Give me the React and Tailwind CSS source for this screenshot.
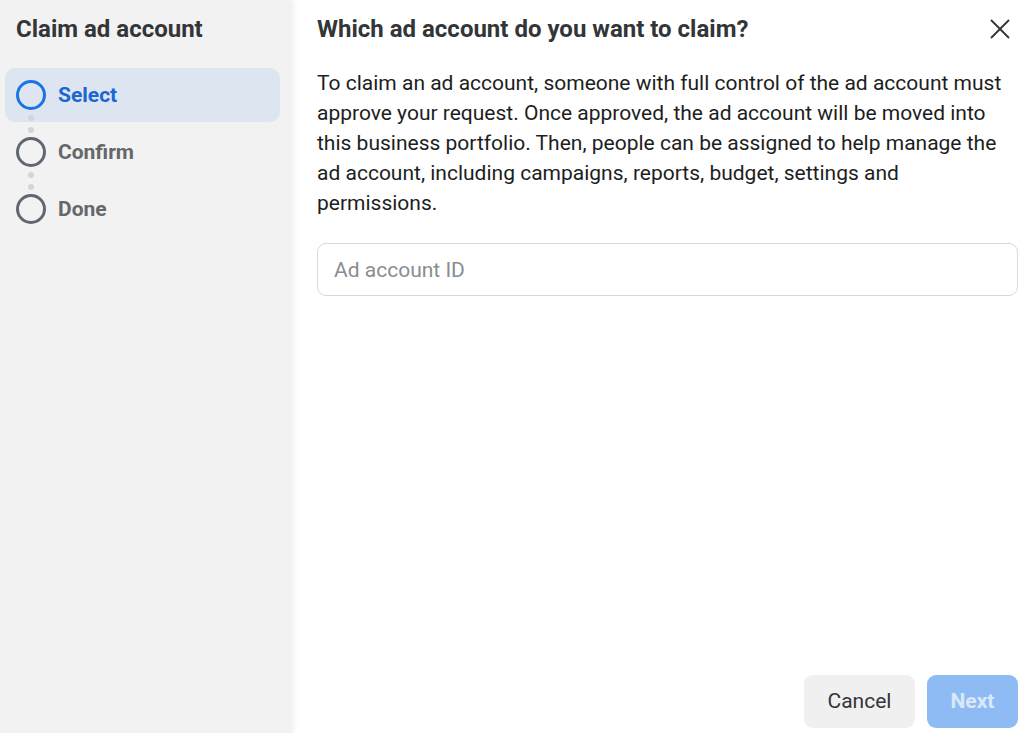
import React from 'react';
import { X } from 'lucide-react';

const steps = [
  { label: 'Select', active: true },
  { label: 'Confirm', active: false },
  { label: 'Done', active: false },
];

const StepCircle = ({ active }) => (
  <div
    className={`w-[30px] h-[30px] rounded-full border-[3px] shrink-0 ${
      active ? 'border-[#1b74e4]' : 'border-[#606770]'
    }`}
  />
);

const App = () => {
  return (
    <div
      className="w-full h-[733px] flex bg-white overflow-hidden"
      style={{ fontFamily: 'Roboto, "Liberation Sans", sans-serif' }}
    >
      {/* left step list */}
      <aside className="w-[292px] shrink-0 h-full bg-[#f2f2f2] shadow-[1px_0_6px_rgba(0,0,0,0.08)] z-10 pl-[5px] pr-3">
        <h2 className="pl-[11px] pt-[14px] h-[68px] text-[24px] leading-[30px] font-bold text-[#333538]">
          Claim ad account
        </h2>
        <div className="flex flex-col gap-[3px]">
          {steps.map((step, i) => (
            <div
              key={step.label}
              className={`relative h-[54px] flex items-center gap-3 pl-[11px] rounded-[10px] ${
                step.active ? 'bg-[#dde6f0]' : ''
              }`}
            >
              <StepCircle active={step.active} />
              <span
                className={`text-[21px] font-bold pt-[2px] ${
                  step.active ? 'text-[#1b66d2]' : 'text-[#65676b]'
                }`}
              >
                {step.label}
              </span>
              {i < steps.length - 1 && (
                <>
                  <span className="absolute left-[23px] top-[47px] w-[6px] h-[6px] rounded-full bg-[#d3d5d8]" />
                  <span className="absolute left-[23px] top-[59px] w-[6px] h-[6px] rounded-full bg-[#d3d5d8]" />
                </>
              )}
            </div>
          ))}
        </div>
      </aside>

      {/* main panel */}
      <main className="flex-1 h-full flex flex-col pl-[25px] pr-3 pb-[5px]">
        <div className="flex items-center justify-between mt-[14px] h-[30px]">
          <h1 className="text-[24px] font-bold text-[#333538] leading-[30px]">
            Which ad account do you want to claim?
          </h1>
          <X className="w-[34px] h-[34px] mr-[1px] text-[#333]" strokeWidth={1.3} />
        </div>
        <p className="mt-[24px] text-[21px] leading-[30px] text-[#1c1e21]">
          To claim an ad account, someone with full control of the ad account must approve your request. Once approved,
          the ad account will be moved into this business portfolio. Then, people can be assigned to help manage the ad
          account, including campaigns, reports, budget, settings and permissions.
        </p>
        <input
          type="text"
          placeholder="Ad account ID"
          className="mt-[25px] h-[53px] w-full rounded-[9px] border border-[#d6d9dd] px-4 text-[21px] text-[#1c1e21] placeholder:text-[#8a8d91] outline-none"
        />
        <div className="mt-auto flex justify-end gap-3">
          <button className="h-[53px] w-[111px] rounded-[9px] bg-[#f0f0f0] text-[21px] text-[#333538]">
            Cancel
          </button>
          <button className="h-[53px] w-[91px] rounded-[9px] bg-[#8fbbf4] text-[21px] font-bold text-[#dbe8fb]">
            Next
          </button>
        </div>
      </main>
    </div>
  );
};

export default App;
